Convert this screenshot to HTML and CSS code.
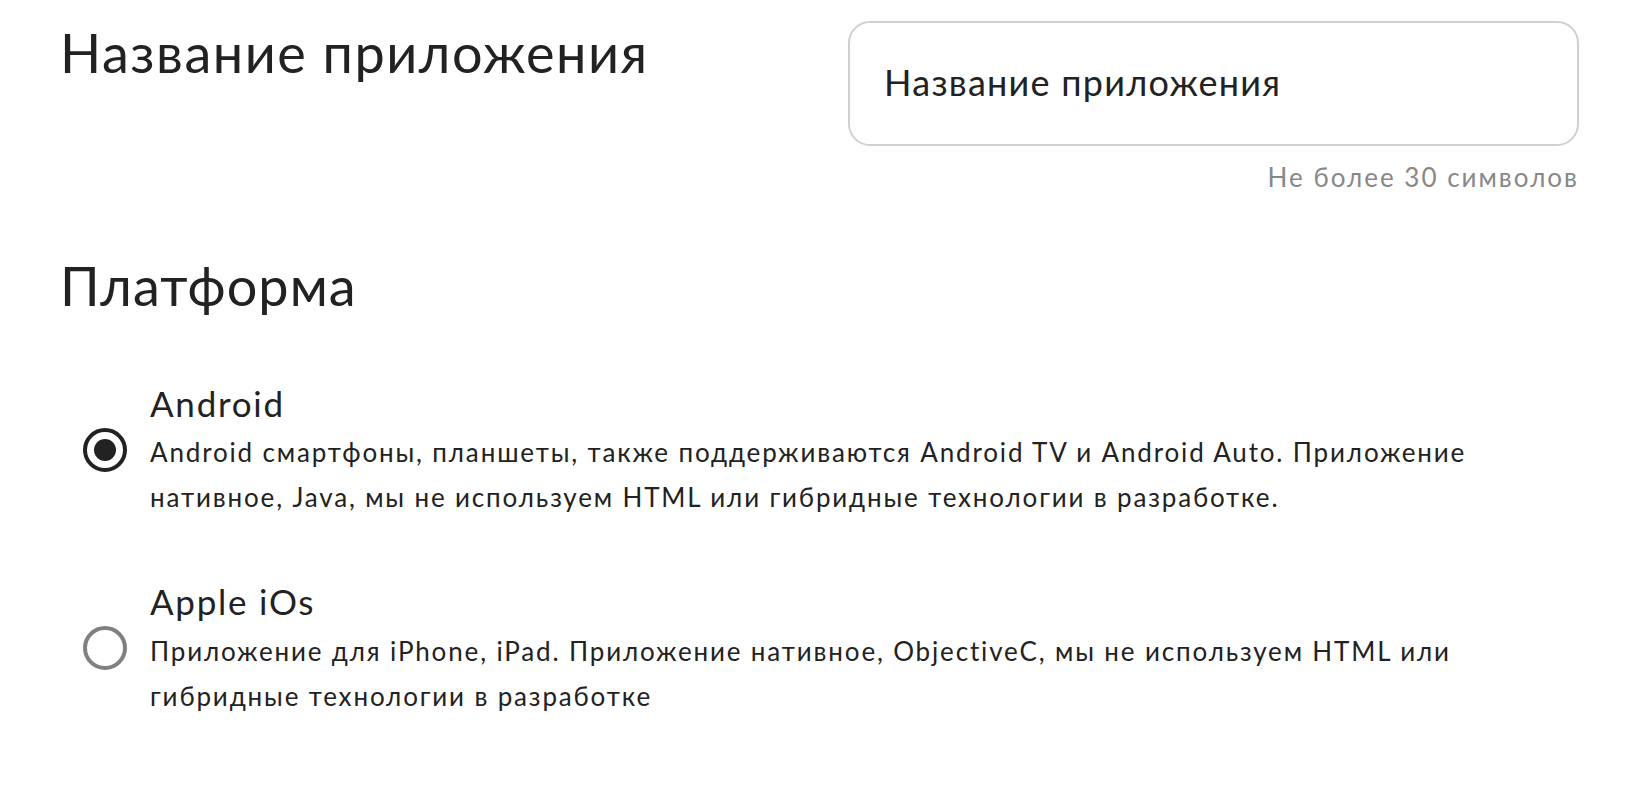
FILE: index.html
```html
<!DOCTYPE html>
<html lang="ru">
<head>
  <meta charset="UTF-8">
  <meta name="viewport" content="width=device-width, initial-scale=1.0">
  <title>Новое приложение</title>
  <link rel="stylesheet" href="styles.css">
</head>
<body>

  <div class="form">
    <div class="field-row">
      <h2 class="field-title">Название приложения</h2>
      <div class="field-control">
        <input type="text" class="text-input" value="Название приложения">
        <div class="hint">Не более 30 символов</div>
      </div>
    </div>

    <h2 class="field-title platform-title">Платформа</h2>

    <div class="options">
      <label class="option">
        <input type="radio" name="platform" value="android" checked>
        <span class="radio"></span>
        <span class="option-text">
          <span class="option-name">Android</span>
          <span class="option-desc">Android смартфоны, планшеты, также поддерживаются Android TV и Android Auto. Приложение нативное, Java, мы не используем HTML или гибридные технологии в разработке.</span>
        </span>
      </label>

      <label class="option">
        <input type="radio" name="platform" value="ios">
        <span class="radio"></span>
        <span class="option-text">
          <span class="option-name">Apple iOs</span>
          <span class="option-desc">Приложение для iPhone, iPad. Приложение нативное, ObjectiveC, мы не используем HTML или гибридные технологии в разработке</span>
        </span>
      </label>
    </div>
  </div>

</body>
</html>
```

FILE: styles.css
```css
body {
  font-family: 'Lato', 'Open Sans', sans-serif;
  background-color: #fff;
  margin: 0;
  padding: 0;
  color: #222;
}

.form {
  padding: 21px 59px 0 60px;
}

.field-row {
  display: grid;
  grid-template-columns: 1fr 731px;
}

.field-title {
  font-size: 54px;
  font-weight: 400;
  letter-spacing: 0.028em;
  line-height: 1.2;
  margin: 0;
}

.text-input {
  display: block;
  box-sizing: border-box;
  width: 100%;
  height: 125px;
  padding: 0 34px 4px;
  border: 2px solid #d0d0d0;
  border-radius: 22px;
  font-family: inherit;
  font-size: 36px;
  letter-spacing: 0.035em;
  color: #222;
  outline: none;
}

.hint {
  text-align: right;
  font-size: 26px;
  letter-spacing: 0.077em;
  color: #888;
  margin-top: 15px;
}

.platform-title {
  margin-top: 61px;
  letter-spacing: 0.02em;
}

.options {
  margin-top: 62px;
}

.option {
  display: flex;
  align-items: center;
  margin-bottom: 59px;
  cursor: pointer;
}

.option input {
  display: none;
}

.radio {
  flex: none;
  box-sizing: border-box;
  width: 44px;
  height: 44px;
  margin: 0 23px 2px;
  border: 4px solid #808080;
  border-radius: 50%;
  position: relative;
}

.option input:checked + .radio {
  border-color: #222;
}

.option input:checked + .radio::after {
  content: '';
  position: absolute;
  left: 7px;
  top: 7px;
  width: 22px;
  height: 22px;
  border-radius: 50%;
  background-color: #222;
}

.option-text {
  display: flex;
  flex-direction: column;
}

.option-name {
  font-size: 35px;
  letter-spacing: 0.05em;
  line-height: 1.3;
  margin-bottom: 4px;
}

.option-desc {
  font-size: 26px;
  letter-spacing: 0.071em;
  line-height: 45px;
}
```
